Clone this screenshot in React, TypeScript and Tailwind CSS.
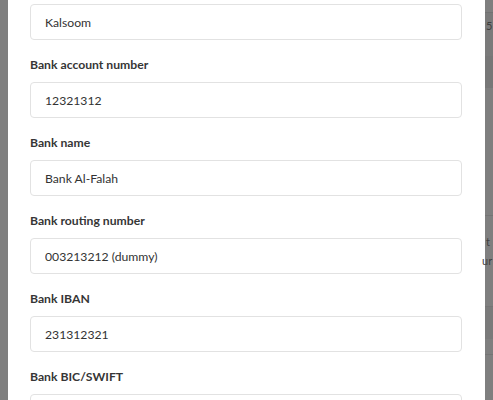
const fields = [
  { label: "", value: "Kalsoom" },
  { label: "Bank account number", value: "12321312" },
  { label: "Bank name", value: "Bank Al-Falah" },
  { label: "Bank routing number", value: "003213212 (dummy)" },
  { label: "Bank IBAN", value: "231312321" },
  { label: "Bank BIC/SWIFT", value: "" },
];

export default function App() {
  return (
    <div
      className="flex h-[400px] w-[493px] overflow-hidden bg-[#7f7f7f]"
      style={{ fontFamily: "Lato, 'Open Sans', sans-serif" }}
    >
      {/* left edge of page behind the overlay */}
      <div className="w-[8px] shrink-0" />

      {/* modal */}
      <div className="flex w-[477px] shrink-0 flex-col bg-white px-[22px] pt-1">
        {fields.map((f, i) => (
          <div key={i} className={i === 0 ? "" : "mt-4"}>
            {f.label && (
              <label className="mb-2 block text-[12.2px] font-bold leading-[18px] text-[#363636]">
                {f.label}
              </label>
            )}
            <input
              readOnly
              defaultValue={f.value}
              className="h-9 w-[432px] rounded border border-[#e2e2e2] bg-white px-[14px] text-[12.2px] text-[#333] outline-none"
            />
          </div>
        ))}
      </div>

      {/* sliver of the page behind, on the right */}
      <div className="flex w-[8px] shrink-0 flex-col text-[11px] leading-none text-[#3f3f3f]">
        <div className="h-[12px]" />
        <div className="h-px bg-[#727272]" />
        <div className="h-[18px] bg-[#7a7a7a] pl-[1px] pt-[7px]">5</div>
        <div className="h-[25px] bg-[#7a7a7a]" />
        <div className="h-[32px] bg-[#777]" />
        <div className="h-[127px]" />
        <div className="h-px bg-[#747474]" />
        <div className="pl-[1px] pt-[20px]">t</div>
        <div className="-ml-[3px] pt-[8px]">ur</div>
        <div className="h-[40px]" />
        <div className="h-px bg-[#757575]" />
        <div className="h-[32px] bg-[#7a7a7a]" />
        <div className="h-[15px]" />
        <div className="h-px bg-[#747474]" />
      </div>
    </div>
  );
}
